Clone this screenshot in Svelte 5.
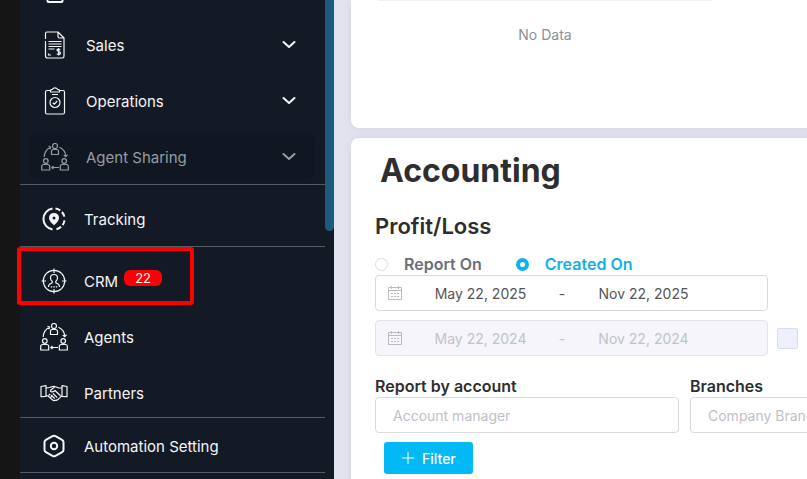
<script>
  let dateBasis = $state('created');
  let compare = $state(false);

  const groups = [
    {
      id: 'work',
      items: [
        { label: 'Sales', icon: 'invoice', expandable: true },
        { label: 'Operations', icon: 'clipboard', expandable: true },
        { label: 'Agent Sharing', icon: 'people', expandable: true, muted: true }
      ]
    },
    { id: 'tracking', items: [{ label: 'Tracking', icon: 'pin' }] },
    {
      id: 'contacts',
      items: [
        { label: 'CRM', icon: 'target', badge: 22, marked: true },
        { label: 'Agents', icon: 'people' },
        { label: 'Partners', icon: 'handshake' }
      ]
    },
    { id: 'settings', items: [{ label: 'Automation Setting', icon: 'hex' }] }
  ];
</script>

{#snippet icon(name)}
  <svg class="icon" viewBox="0 0 28 28" aria-hidden="true">
    {#if name === 'invoice'}
      <path d="M4.5 8V2.5q0-1.500 1.500-1.500h11l6 6v18q0 2-1.500 2h-15q-2 0-2-2V10M17 1v4.500q0 1.500 1.500 1.500H23" />
      <path d="M7.500 10.500h13M7.500 13h13M7.500 15.500h13M7.500 18h6M7.500 22.500v1.500h2.500" />
      <path d="M19.300 18.800q-2.800-1.500-3.300.2c0 1.900 3.500 1.100 3.500 3 0 1.800-2.700 1.600-3.700.7M17.700 17v7.500" />
    {:else if name === 'clipboard'}
      <path d="M9.500 3.500H6q-1.500 0-1.500 1.500v20.500q0 1.500 1.500 1.500h16q1.500 0 1.500-1.500V5q0-1.500-1.500-1.500h-3.500" />
      <path d="M9.500 5V3.500q0-1 2-1.200Q12.200.8 14 .8t2.500 1.500q2 .2 2 1.200V5zM11 7.500h6" />
      <circle cx="14" cy="15.500" r="5" />
      <path d="M11.800 15.700l1.600 1.500 2.800-3.200" />
    {:else if name === 'people'}
      <circle cx="14" cy="3" r="2.500" />
      <path d="M10.500 11.500V8.500q0-2 2-2h3q2 0 2 2v3z" />
      <circle cx="4.800" cy="18" r="2.300" />
      <path d="M.7 27v-3.500q0-2 2-2h4q2 0 2 2V27z" />
      <circle cx="23.200" cy="18" r="2.300" />
      <path d="M19.300 27v-3.500q0-2 2-2h4q2 0 2 2V27z" />
      <path d="M3.200 14Q3.500 7 9.500 4.200M7.500 3.200l2.200.9-.9 2.200M18.500 4.200Q24.500 7 24.800 13.500M22.800 12l2 1.700 1.800-2M18 24.500h-7M12.500 23l-1.700 1.500 1.700 1.500" />
    {:else if name === 'pin'}
      <g class="bold">
        <path d="M12.500 3.600a10.500 10.500 0 0 0 0 20.800" />
        <path d="M15.500 3.600a10.500 10.500 0 0 1 9 9" stroke-dasharray="5.200 2.200" />
        <path d="M24.500 15.400a10.500 10.500 0 0 1-9 9" stroke-dasharray="5.200 2.200" />
      </g>
      <path class="solid" fill-rule="evenodd" d="M14 20.200Q9 16 9 12.900a5 5 0 0 1 10 0Q19 16 14 20.200zM14 11.400a1.500 1.500 0 1 0 0 3 1.500 1.500 0 0 0 0-3z" />
    {:else if name === 'target'}
      <circle cx="14" cy="14" r="10.700" />
      <path d="M14 1.500v4.500M14 22v4.500M1.500 14H6M22 14h4.500" />
      <path d="M8.500 20C8.500 17.500 9.500 17 11 16.500C12.500 16 12.500 15.500 12.300 14.500C10.800 13.500 10.500 12 10.500 10.800C10.500 8.700 12 7.500 14 7.500C16 7.500 17.500 8.700 17.500 10.800C17.500 12 17.200 13.500 15.700 14.500C15.500 15.500 15.500 16 17 16.500C18.500 17 19.500 17.500 19.500 20" />
      <path d="M10.800 19.800h6.400" stroke-dasharray="1.400 1.100" />
    {:else if name === 'handshake'}
      <path d="M1 7.500l5-.8v10.600l-5 .3zM27 7.500l-5-.8v10.600l5 .3z" />
      <path d="M6 9l3.500-.5 3-1q1.500-.5 3 .2l3.500 1.300H22M6 16.500l2 .5 5 4.200q1.200 1 2 0 1.500.7 2-.5 1.500.3 1.700-1.200 1.500 0 1.600-1.500l1.700-1" />
      <path d="M14.500 8l-3.700 3q-.8 1.200.5 1.800 2 .3 3.700-1.300l5.500 5.300M13 14.500l4.200 4.200M11 15.800l3.700 3.700M8.500 16.500l1.700-1.500M10.500 18.500l1.500-1.700" />
    {:else if name === 'hex'}
      <g class="bold">
        <path d="M12.500 4.200q1.500-.9 3 0l6.600 3.700q1.400.8 1.400 2.400v7.400q0 1.600-1.400 2.400l-6.600 3.700q-1.500.9-3 0l-6.600-3.700q-1.400-.8-1.400-2.400v-7.400q0-1.600 1.400-2.400z" />
        <circle cx="14" cy="14" r="3.200" />
      </g>
    {/if}
  </svg>
{/snippet}

{#snippet calendar()}
  <svg class="calendar" viewBox="0 0 16 16" aria-hidden="true">
    <path d="M1.500 2.500h13v12h-13zM1.500 5.500h13M4.500 1v3M11.500 1v3" />
    <path d="M4 8.500h8M4 11.500h8" stroke-dasharray="2 1" />
  </svg>
{/snippet}

<div class="layout">
  <aside>
    <nav>
      <svg class="icon clipped" viewBox="0 0 28 28" aria-hidden="true">
        <path d="M6.500 2h15v24q0 1-1 1h-13q-1 0-1-1z" />
      </svg>
      {#each groups as group (group.id)}
        <ul class={group.id}>
          {#each group.items as item (item.label)}
            <li class:muted={item.muted}>
              <a href="#{item.icon}">
                {@render icon(item.icon)}
                <span>{item.label}</span>
                {#if item.badge}
                  <b class="badge">{item.badge}</b>
                {/if}
                {#if item.expandable}
                  <svg class="chevron" viewBox="0 0 16 16" aria-hidden="true">
                    <path d="M2.500 5L8 10l5.500-5" />
                  </svg>
                {/if}
              </a>
              {#if item.marked}<i class="marker"></i>{/if}
            </li>
          {/each}
        </ul>
      {/each}
    </nav>
    <div class="scrollbar"></div>
  </aside>

  <main>
    <div class="cards">
      <section class="card empty">
        <p>No Data</p>
      </section>

      <section class="card accounting">
        <h1>Accounting</h1>
        <h2>Profit/Loss</h2>

        <div class="radios">
          <label>
            <input type="radio" name="basis" value="report" bind:group={dateBasis} />
            <span>Report On</span>
          </label>
          <label>
            <input type="radio" name="basis" value="created" bind:group={dateBasis} />
            <span>Created On</span>
          </label>
        </div>

        <div class="range">
          {@render calendar()}
          <input type="text" value="May 22, 2025" aria-label="Start date" />
          <span class="dash">-</span>
          <input type="text" value="Nov 22, 2025" aria-label="End date" />
        </div>
        <div class="compare">
          <div class="range off">
            {@render calendar()}
            <input type="text" value="May 22, 2024" aria-label="Compare start date" disabled />
            <span class="dash">-</span>
            <input type="text" value="Nov 22, 2024" aria-label="Compare end date" disabled />
          </div>
          <input type="checkbox" aria-label="Compare" bind:checked={compare} />
        </div>

        <div class="fields">
          <div class="field">
            <label for="account">Report by account</label>
            <input id="account" type="text" placeholder="Account manager" />
          </div>
          <div class="field">
            <label for="branch">Branches</label>
            <input id="branch" type="text" placeholder="Company Branch" />
          </div>
        </div>

        <button type="button">
          <svg viewBox="0 0 14 14" aria-hidden="true"><path d="M7 1v12M1 7h12" /></svg>
          Filter
        </button>
      </section>
    </div>
  </main>
</div>

<style>
  :global(body) {
    overflow: hidden;
    background: #151515;
    font-family: Inter, "Liberation Sans", sans-serif;
  }

  .layout {
    display: flex;
    height: 100vh;
    padding-left: 20px;
    box-sizing: border-box;
  }

  aside {
    flex: 0 0 314px;
    display: flex;
    background: #141a25;
    color: #f4f5f7;
  }

  nav {
    flex: 1;
  }

  .scrollbar {
    width: 9px;
    height: 231px;
    background: #1b5b7b;
    border-radius: 0 0 5px 5px;
  }

  ul {
    display: flex;
    flex-direction: column;
    gap: 12px;
    margin: 0;
    padding: 0 10px;
    list-style: none;
    border-bottom: 1px solid #555b65;
  }

  .work {
    padding-top: 20px;
    padding-bottom: 5px;
  }

  .tracking {
    padding-top: 12px;
    padding-bottom: 5px;
  }

  .contacts {
    padding-top: 12px;
    padding-bottom: 2px;
  }

  .settings {
    padding-top: 6px;
    padding-bottom: 4px;
  }

  li {
    position: relative;
    border-radius: 6px;
  }

  a {
    display: flex;
    align-items: center;
    height: 44px;
    padding: 0 18px 0 10px;
    color: inherit;
    font-size: 15px;
    font-weight: 400;
    text-decoration: none;
  }

  a span {
    margin-left: 16px;
  }

  .work a {
    padding-left: 11px;
  }

  .work a span {
    margin-left: 17px;
  }

  .muted {
    background: #111722;
    color: #989ba1;
  }

  .icon {
    flex: none;
    width: 28px;
    height: 28px;
    fill: none;
    stroke: currentColor;
    stroke-width: 1.2;
    stroke-linejoin: round;
  }

  .icon .bold {
    stroke-width: 2;
  }

  .icon .solid {
    fill: currentColor;
    stroke: none;
  }

  .clipped {
    display: block;
    margin: -25px 0 0 21px;
    stroke-width: 2;
  }

  .chevron {
    width: 16px;
    height: 16px;
    margin-left: auto;
    fill: none;
    stroke: currentColor;
    stroke-width: 2;
    stroke-linecap: round;
    stroke-linejoin: round;
  }

  .badge {
    margin: -6px 0 0 6px;
    padding: 0 11px;
    border-radius: 6px;
    background: #fb0007;
    font-size: 13px;
    font-weight: 400;
    line-height: 16px;
  }

  .marker {
    position: absolute;
    inset: -12px 121px -2px -13px;
    border: 4px solid #ff0000;
    border-radius: 3px;
    pointer-events: none;
  }

  main {
    flex: 1;
    min-width: 0;
    overflow: hidden;
    background: #e3e3f0;
  }

  .cards {
    display: flex;
    flex-direction: column;
    gap: 10px;
    width: max-content;
    min-width: 100%;
    padding: 0 17px;
    box-sizing: border-box;
  }

  .card {
    background: #fff;
    border-radius: 8px;
    box-shadow: 0 0 8px rgba(80, 80, 140, 0.12);
  }

  .empty {
    border-radius: 0 0 8px 8px;
    padding: 0 27px 84px;
  }

  .empty p {
    width: 334px;
    margin: 0;
    padding-top: 25px;
    border-top: 1px solid #f1f1f3;
    color: #8f8f93;
    font-size: 14px;
    line-height: 18px;
    text-align: center;
  }

  .accounting {
    padding: 12px 24px 24px;
    color: #2e2e30;
  }

  h1 {
    margin: 0 0 0 5px;
    font-size: 32px;
    line-height: 42px;
  }

  h2 {
    margin: 20px 0 13px;
    font-size: 22px;
    font-weight: 600;
    line-height: 28px;
  }

  .radios {
    display: flex;
    gap: 34px;
    height: 22px;
  }

  .radios label {
    display: flex;
    align-items: center;
    gap: 16px;
    color: #6e6e7a;
    font-size: 16px;
    font-weight: 600;
  }

  .radios label:has(:checked) {
    color: #12b0e8;
  }

  input {
    box-sizing: border-box;
    font-family: inherit;
  }

  input[type="radio"] {
    appearance: none;
    width: 13px;
    height: 13px;
    margin: 0;
    border: 1px solid #dcdce0;
    border-radius: 50%;
  }

  input[type="radio"]:checked {
    border: 4px solid #0fb0f2;
  }

  .range {
    display: flex;
    align-items: center;
    width: 393px;
    height: 36px;
    box-sizing: border-box;
    padding-left: 11px;
    border: 1px solid #d9d9de;
    border-radius: 4px;
    color: #555;
    font-size: 14px;
  }

  .range input {
    width: 123px;
    padding: 0;
    border: 0;
    background: none;
    color: inherit;
    font-size: 14px;
    text-align: center;
  }

  .dash {
    width: 40px;
    text-align: center;
  }

  .calendar {
    width: 16px;
    height: 16px;
    margin-right: 16px;
    fill: none;
    stroke: #b9bbc1;
  }

  .off {
    background: #f5f5fa;
    border-color: #e2e2e7;
    color: #c0c3cb;
  }

  .compare {
    display: flex;
    align-items: center;
    gap: 9px;
    margin-top: 9px;
  }

  input[type="checkbox"] {
    appearance: none;
    width: 21px;
    height: 21px;
    margin: 0;
    border: 1px solid #d9dceb;
    border-radius: 2px;
    background: #ecf0ff;
  }

  .fields {
    display: grid;
    grid-template-columns: repeat(3, 304px);
    gap: 11px;
    margin-top: 19px;
  }

  .field label {
    display: block;
    font-size: 16px;
    font-weight: 600;
    line-height: 22px;
  }

  .field input {
    display: block;
    width: 100%;
    height: 36px;
    padding: 0 17px;
    border: 1px solid #d9d9de;
    border-radius: 4px;
    font-size: 14px;
  }

  .field input::placeholder {
    color: #bfbfc6;
  }

  button {
    display: flex;
    align-items: center;
    gap: 7px;
    height: 32px;
    margin: 9px 0 0 9px;
    padding: 0 17px;
    border: 0;
    border-radius: 3px;
    background: #02b8f5;
    color: #fff;
    font: 500 14px Inter, sans-serif;
  }

  button svg {
    width: 14px;
    height: 14px;
    fill: none;
    stroke: currentColor;
  }
</style>
